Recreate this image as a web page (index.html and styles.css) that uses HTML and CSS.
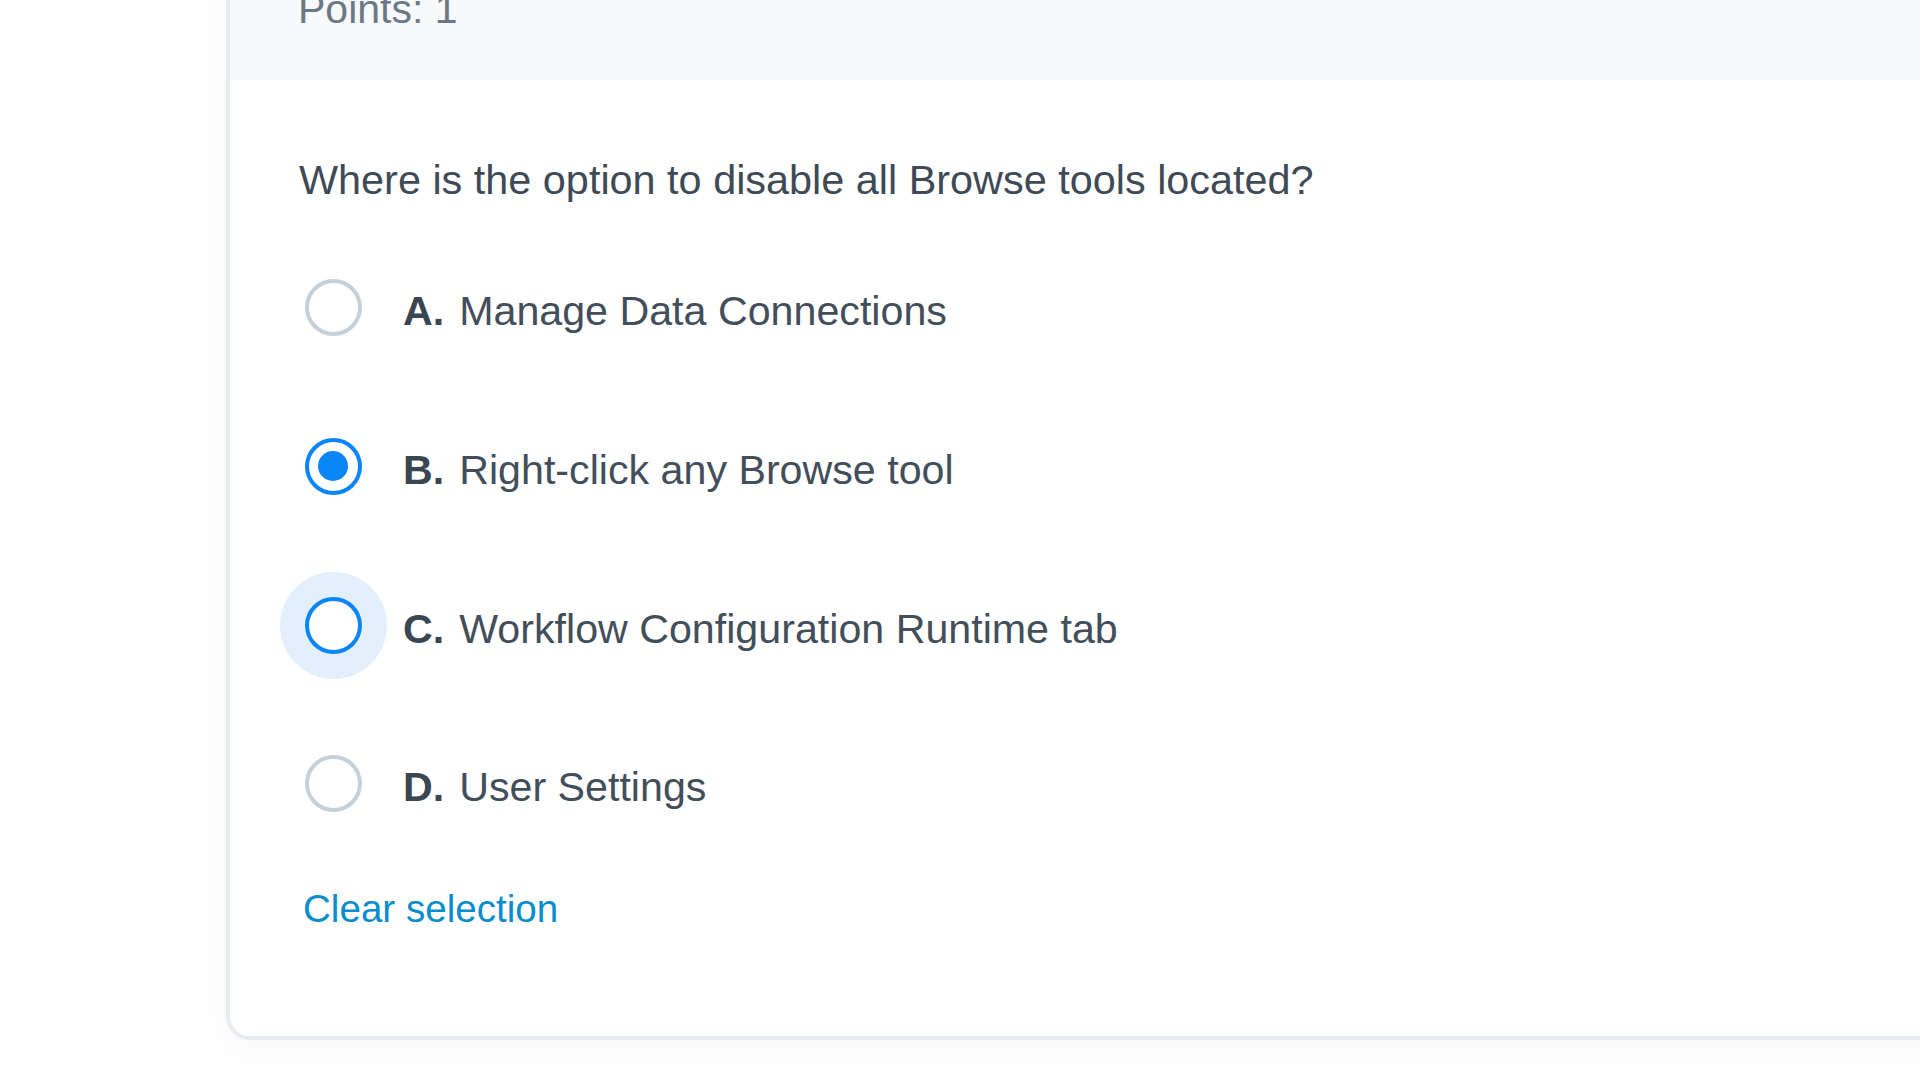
FILE: index.html
```html
<!DOCTYPE html>
<html lang="en">
<head>
<meta charset="utf-8">
<title>Question</title>
<link rel="stylesheet" href="styles.css">
</head>
<body>
<div class="page">
  <section class="card">
    <header class="card-header">
      <span class="points">Points: 1</span>
    </header>
    <div class="card-body">
      <p class="question">Where is the option to disable all Browse tools located?</p>
      <div class="options">
        <label class="option">
          <span class="radio-wrap"><span class="radio"></span></span>
          <span class="label"><b class="letter">A.</b>Manage Data Connections</span>
        </label>
        <label class="option">
          <span class="radio-wrap"><span class="radio checked"></span></span>
          <span class="label"><b class="letter">B.</b>Right-click any Browse tool</span>
        </label>
        <label class="option">
          <span class="radio-wrap hover"><span class="radio focus"></span></span>
          <span class="label"><b class="letter">C.</b>Workflow Configuration Runtime tab</span>
        </label>
        <label class="option">
          <span class="radio-wrap"><span class="radio"></span></span>
          <span class="label"><b class="letter">D.</b>User Settings</span>
        </label>
      </div>
      <a class="clear" href="#">Clear selection</a>
    </div>
  </section>
</div>
</body>
</html>
```
FILE: styles.css
```css
html, body {
  margin: 0;
  padding: 0;
  background: #ffffff;
  overflow: hidden;
}
body {
  font-family: "Liberation Sans", Arial, sans-serif;
  width: 1920px;
  height: 1080px;
}
.page {
  padding-left: 226px;
}
.card {
  margin-top: -59px;
  margin-right: -80px;
  border: 4px solid #e8ebef;
  border-radius: 24px;
  background: #ffffff;
  overflow: hidden;
  box-shadow: 0 10px 30px rgba(0, 0, 0, 0.035);
}
.card-header {
  height: 135px;
  box-sizing: border-box;
  background: #f8f9fb;
  display: flex;
  align-items: flex-end;
  padding: 0 0 47px 68px;
}
.points {
  font-size: 41px;
  line-height: 47px;
  color: #6b7886;
}
.card-body {
  padding: 77px 0 105px 69px;
}
.question {
  margin: 0;
  font-size: 41.4px;
  line-height: 47px;
  color: #3f4a57;
}
.options {
  display: flex;
  flex-direction: column;
  gap: 51.67px;
  margin: 50.2px 0 50.3px -19.5px;
}
.option {
  display: flex;
  align-items: center;
  height: 107px;
}
.radio-wrap {
  width: 107px;
  height: 107px;
  border-radius: 50%;
  display: flex;
  align-items: center;
  justify-content: center;
  flex: none;
}
.radio-wrap.hover {
  background: #e3f0fc;
}
.radio {
  width: 57px;
  height: 57px;
  box-sizing: border-box;
  border-radius: 50%;
  border: 4px solid #c6d0d9;
  background: #ffffff;
  display: flex;
  align-items: center;
  justify-content: center;
}
.radio.checked,
.radio.focus {
  border-color: #0a85fa;
}
.radio.checked::after {
  content: "";
  width: 30px;
  height: 30px;
  border-radius: 50%;
  background: #0a85fa;
}
.label {
  margin-left: 16.5px;
  padding-top: 8px;
  font-size: 41.2px;
  line-height: 47px;
  color: #434e5b;
  white-space: nowrap;
}
.letter {
  font-weight: 700;
  color: #3b4653;
  margin-right: 15px;
}
.clear {
  display: inline-block;
  margin-left: 4px;
  font-size: 38.6px;
  line-height: 44px;
  color: #0a8dcc;
  text-decoration: none;
}
```
